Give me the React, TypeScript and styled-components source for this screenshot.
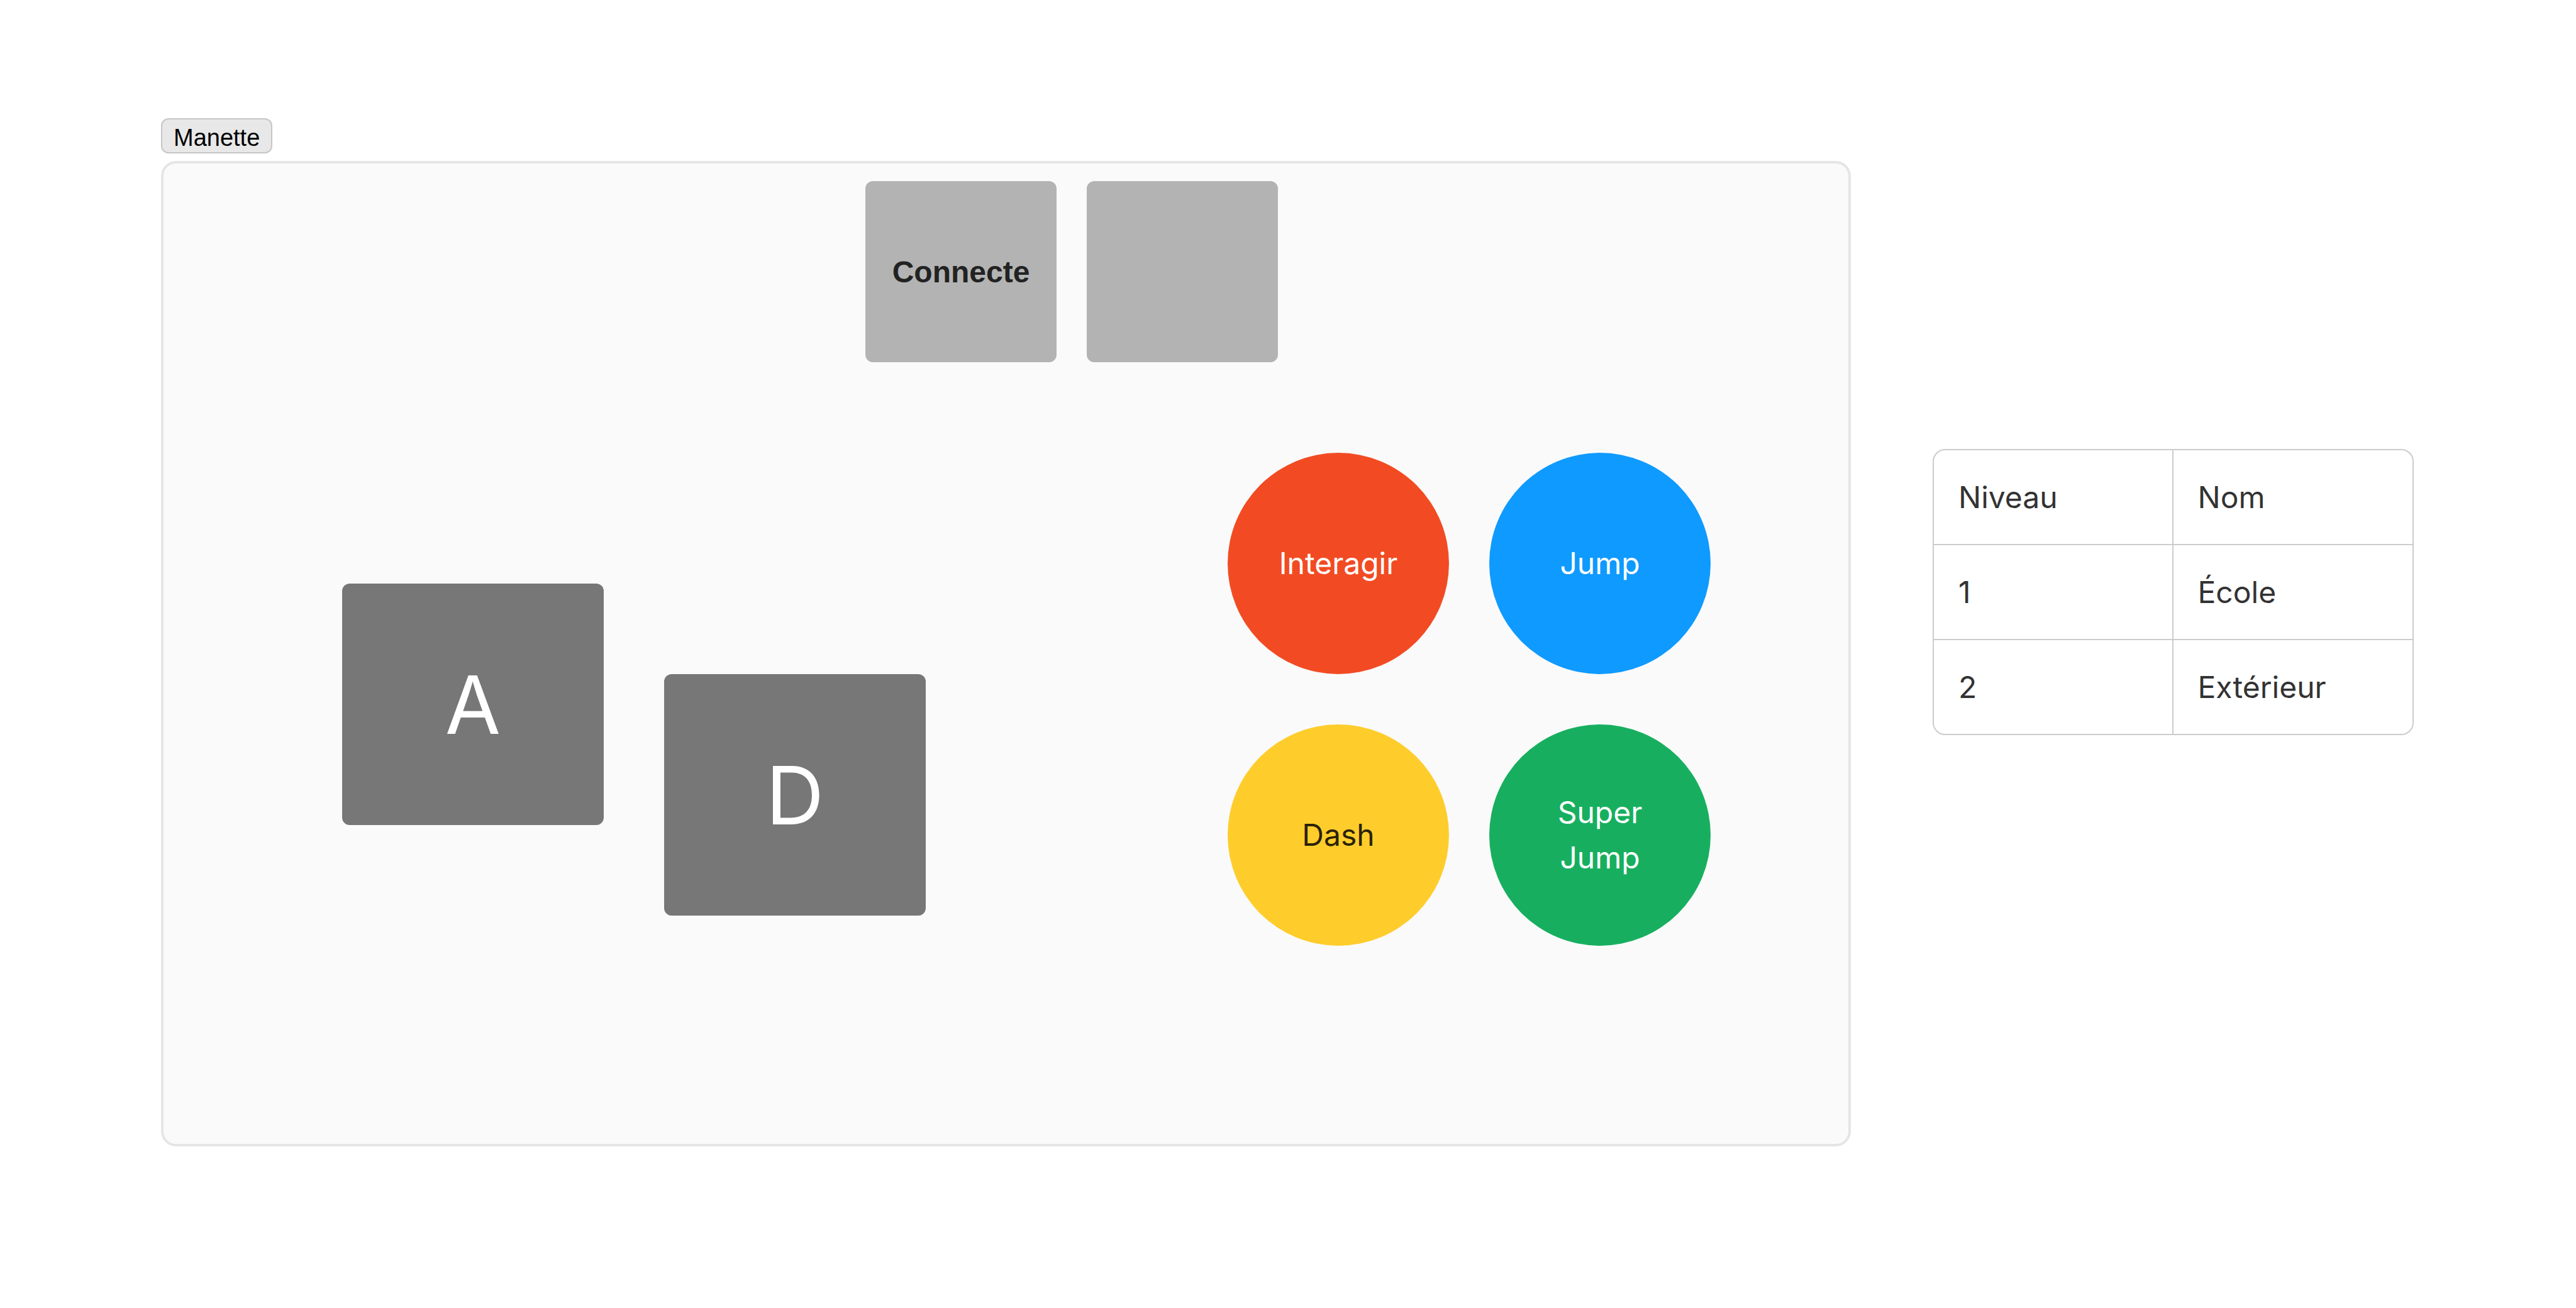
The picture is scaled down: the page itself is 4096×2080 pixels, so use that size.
import React from "react";
import styled, { createGlobalStyle } from "styled-components";

const GlobalStyle = createGlobalStyle`
  html, body {
    margin: 0;
    padding: 0;
    background: #fff;
  }
  body {
    font-family: Inter, "Noto Sans", sans-serif;
  }
`;

const Page = styled.div`
  display: flex;
  align-items: flex-start;
  gap: 130px;
  padding: 188px 0 0 256px;
`;

const ControllerColumn = styled.div`
  display: flex;
  flex-direction: column;
  align-items: flex-start;
  gap: 12px;
`;

const ToggleButton = styled.button`
  height: 56px;
  padding: 5px 18px 0;
  font-family: "Liberation Sans", Arial, sans-serif;
  font-size: 38px;
  line-height: 1;
  color: #000;
  background: #e8e8e8;
  border: 2px solid #c6c6c6;
  border-radius: 12px;
`;

const Pad = styled.div`
  box-sizing: border-box;
  width: 2687px;
  height: 1567px;
  background: #fafafa;
  border: 4px solid #e5e5e5;
  border-radius: 24px;
  display: flex;
  flex-direction: column;
`;

const TopRow = styled.div`
  display: flex;
  gap: 48px;
  padding: 28px 0 0 1116px;
`;

const StatusBox = styled.div`
  width: 304px;
  height: 288px;
  border-radius: 12px;
  background: #b3b3b3;
  display: flex;
  align-items: center;
  justify-content: center;
  font-family: "Liberation Sans", Arial, sans-serif;
  font-weight: 700;
  font-size: 48px;
  color: #222;
`;

const MainRow = styled.div`
  display: flex;
  align-items: flex-start;
  gap: 480px;
  padding: 144px 0 0 284px;
`;

const DPad = styled.div`
  display: flex;
  align-items: flex-start;
  gap: 96px;
  margin-top: 208px;
`;

const DirKey = styled.div<{ $drop?: number }>`
  width: 416px;
  height: 384px;
  margin-top: ${(p) => p.$drop ?? 0}px;
  border-radius: 12px;
  background: #777;
  color: #fff;
  font-size: 128px;
  display: flex;
  align-items: center;
  justify-content: center;
`;

const FaceGrid = styled.div`
  display: grid;
  grid-template-columns: 352px 352px;
  grid-auto-rows: 352px;
  column-gap: 64px;
  row-gap: 80px;
`;

const FaceButton = styled.div<{ $bg: string; $ink?: string }>`
  box-sizing: border-box;
  border-radius: 50%;
  background: ${(p) => p.$bg};
  color: ${(p) => p.$ink ?? "#fff"};
  padding: 0 64px;
  display: flex;
  align-items: center;
  justify-content: center;
  text-align: center;
  font-size: 48px;
  line-height: 1.5;
`;

const LevelTable = styled.table`
  margin-top: 526px;
  width: 765px;
  table-layout: fixed;
  border-collapse: separate;
  border-spacing: 0;
  border: 2px solid #cccccc;
  border-radius: 20px;
  overflow: hidden;
  background: #fff;
  color: #333;
  font-size: 48px;

  th,
  td {
    height: 149px;
    padding: 0 0 0 39px;
    text-align: left;
    font-weight: 400;
    border-bottom: 2px solid #cccccc;
    border-right: 2px solid #cccccc;
  }
  th:last-child,
  td:last-child {
    border-right: none;
  }
  tbody tr:last-child td {
    border-bottom: none;
  }
`;

const levels = [
  { id: 1, name: "École" },
  { id: 2, name: "Extérieur" },
];

const App = () => {
  return (
    <>
      <GlobalStyle />
      <Page>
        <ControllerColumn>
          <ToggleButton>Manette</ToggleButton>
          <Pad>
            <TopRow>
              <StatusBox>Connecte</StatusBox>
              <StatusBox />
            </TopRow>
            <MainRow>
              <DPad>
                <DirKey>A</DirKey>
                <DirKey $drop={144}>D</DirKey>
              </DPad>
              <FaceGrid>
                <FaceButton $bg="#f24b23">Interagir</FaceButton>
                <FaceButton $bg="#0f9aff">Jump</FaceButton>
                <FaceButton $bg="#fecd2b" $ink="#2a2208">
                  Dash
                </FaceButton>
                <FaceButton $bg="#17af5f">Super Jump</FaceButton>
              </FaceGrid>
            </MainRow>
          </Pad>
        </ControllerColumn>
        <LevelTable>
          <thead>
            <tr>
              <th>Niveau</th>
              <th>Nom</th>
            </tr>
          </thead>
          <tbody>
            {levels.map((l) => (
              <tr key={l.id}>
                <td>{l.id}</td>
                <td>{l.name}</td>
              </tr>
            ))}
          </tbody>
        </LevelTable>
      </Page>
    </>
  );
};

export default App;
